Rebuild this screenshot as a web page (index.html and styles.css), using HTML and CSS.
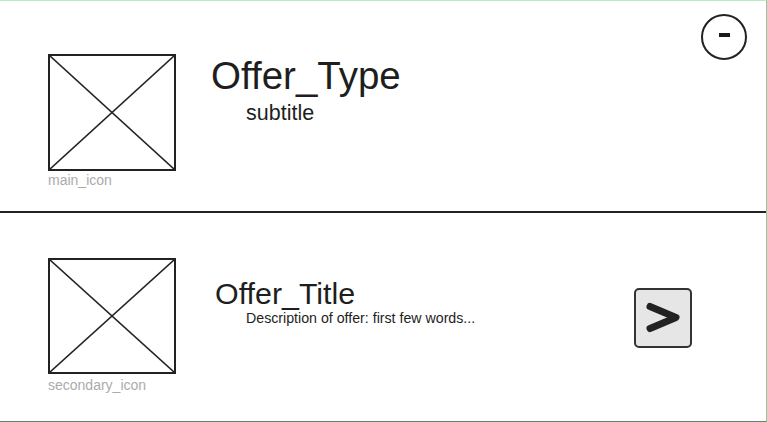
FILE: index.html
```html
<!DOCTYPE html>
<html>
<head>
<meta charset="utf-8">
<link rel="stylesheet" href="styles.css">
</head>
<body>
<div class="frame">
  <section class="row row-top">
    <div class="icon-col">
      <div class="ph">
        <svg viewBox="0 0 124 113" preserveAspectRatio="none"><line x1="0" y1="0" x2="124" y2="113"/><line x1="124" y1="0" x2="0" y2="113"/></svg>
      </div>
      <div class="ph-label first">main_icon</div>
    </div>
    <div class="text-col type-col">
      <div class="type-title">Offer_Type</div>
      <div class="type-sub">subtitle</div>
    </div>
    <button class="minus" aria-label="collapse"><span class="dash"></span></button>
  </section>
  <div class="divider"></div>
  <section class="row row-bottom">
    <div class="icon-col icon-col-2">
      <div class="ph">
        <svg viewBox="0 0 124 113" preserveAspectRatio="none"><line x1="0" y1="0" x2="124" y2="113"/><line x1="124" y1="0" x2="0" y2="113"/></svg>
      </div>
      <div class="ph-label second">secondary_icon</div>
    </div>
    <div class="text-col offer-col">
      <div class="offer-title">Offer_Title</div>
      <div class="offer-desc">Description of offer: first few words...</div>
    </div>
    <button class="next" aria-label="open">
      <svg viewBox="0 0 54 56"><polyline points="14,16.5 40,27.5 14,38.5"/></svg>
    </button>
  </section>
</div>
</body>
</html>
```
FILE: styles.css
```css
html, body {
  margin: 0;
  padding: 0;
  background: #fff;
}
body {
  font-family: "Liberation Sans", Arial, sans-serif;
  color: #1e1e1e;
}
.frame {
  width: 767px;
  height: 422px;
  box-sizing: border-box;
  border-top: 1px solid #b2efc2;
  border-right: 1px solid #8ccb9b;
  border-bottom: 1px solid #66806b;
  display: flex;
  flex-direction: column;
}
.row {
  display: flex;
  align-items: flex-start;
}
.row-top {
  height: 210px;
}
.row-bottom {
  flex: 1;
}
.divider {
  height: 2px;
  background: #222;
}
.icon-col {
  margin-left: 48px;
  margin-top: 53px;
  width: 128px;
  flex: none;
}
.icon-col-2 {
  margin-top: 45px;
}
.ph {
  width: 128px;
  height: 117px;
  box-sizing: border-box;
  border: 2px solid #222;
}
.icon-col-2 .ph {
  height: 116px;
}
.ph svg {
  display: block;
  width: 124px;
  height: 113px;
}
.icon-col-2 .ph svg {
  height: 112px;
}
.ph svg line {
  stroke: #222;
  stroke-width: 1.6;
}
.ph-label {
  font-size: 14px;
  line-height: 16px;
  color: #ababab;
}
.ph-label.first {
  margin-top: 1px;
}
.ph-label.second {
  margin-top: 3px;
}
.type-col {
  margin-left: 35px;
  margin-top: 54px;
}
.type-title {
  font-size: 38.5px;
  line-height: 42px;
}
.type-sub {
  font-size: 21.5px;
  line-height: 24px;
  margin-top: 4px;
  padding-left: 35px;
}
.offer-col {
  margin-left: 39px;
  margin-top: 63px;
}
.offer-title {
  font-size: 30.4px;
  line-height: 34px;
}
.offer-desc {
  font-size: 14.2px;
  line-height: 16px;
  padding-left: 31px;
}
.minus {
  margin-left: auto;
  margin-right: 19px;
  margin-top: 13px;
  width: 46px;
  height: 46px;
  box-sizing: border-box;
  border: 2px solid #222;
  border-radius: 50%;
  background: #fff;
  padding: 0;
  display: flex;
  align-items: center;
  justify-content: center;
}
.dash {
  display: block;
  width: 11px;
  height: 4px;
  background: #1a1a1a;
  margin-top: -4px;
}
.next {
  margin-left: auto;
  margin-right: 74px;
  margin-top: 75px;
  width: 58px;
  height: 60px;
  box-sizing: border-box;
  border: 2px solid #333;
  border-radius: 5px;
  background: #e6e6e6;
  padding: 0;
}
.next svg {
  display: block;
  width: 54px;
  height: 56px;
}
.next polyline {
  fill: none;
  stroke: #222;
  stroke-width: 7;
  stroke-linecap: round;
  stroke-linejoin: round;
}
```
